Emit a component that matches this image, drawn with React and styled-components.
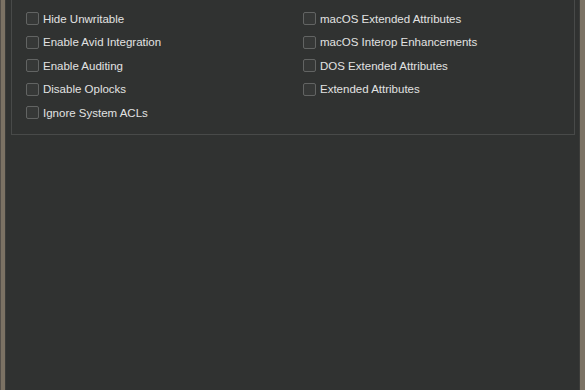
import React from "react";
import styled, { createGlobalStyle } from "styled-components";

const leftOptions = [
  "Hide Unwritable",
  "Enable Avid Integration",
  "Enable Auditing",
  "Disable Oplocks",
  "Ignore System ACLs",
];

const rightOptions = [
  "macOS Extended Attributes",
  "macOS Interop Enhancements",
  "DOS Extended Attributes",
  "Extended Attributes",
];

const GlobalStyle = createGlobalStyle`
  html, body {
    margin: 0;
    padding: 0;
    background: #303231;
  }
  body {
    font-family: "Liberation Sans", Arial, sans-serif;
  }
`;

export default function App() {
  return (
    <>
      <GlobalStyle />
      <Frame>
        <Panel>
          <Group>
            <Column>
              {leftOptions.map((label) => (
                <Option key={label}>
                  <Box />
                  <span>{label}</span>
                </Option>
              ))}
            </Column>
            <Column>
              {rightOptions.map((label) => (
                <Option key={label}>
                  <Box />
                  <span>{label}</span>
                </Option>
              ))}
            </Column>
          </Group>
        </Panel>
      </Frame>
    </>
  );
}

const Frame = styled.div`
  display: flex;
  width: 585px;
  height: 390px;
  box-sizing: border-box;
  background: #7b7264;
  border-left: 1px solid #55504a;
  padding: 0 5px 0 4px;
`;

const Panel = styled.div`
  flex: 1;
  box-sizing: border-box;
  background: #303231;
  border-left: 1px solid #3b3c3a;
  border-right: 1px solid #3b3c3a;
  padding: 0 4px 0 5px;
`;

const Group = styled.div`
  display: grid;
  grid-template-columns: 277px 1fr;
  box-sizing: border-box;
  border: 1px solid #484a49;
  border-top: none;
  padding: 7px 14px 9px;
`;

const Column = styled.div`
  display: flex;
  flex-direction: column;
`;

const Option = styled.label`
  display: flex;
  align-items: center;
  gap: 4px;
  height: 23.5px;
  font-size: 11.5px;
  color: #e2e2e2;
`;

const Box = styled.span`
  width: 13px;
  height: 13px;
  box-sizing: border-box;
  border: 1px solid #626463;
  border-radius: 2px;
  background: #363837;
  flex-shrink: 0;
`;
